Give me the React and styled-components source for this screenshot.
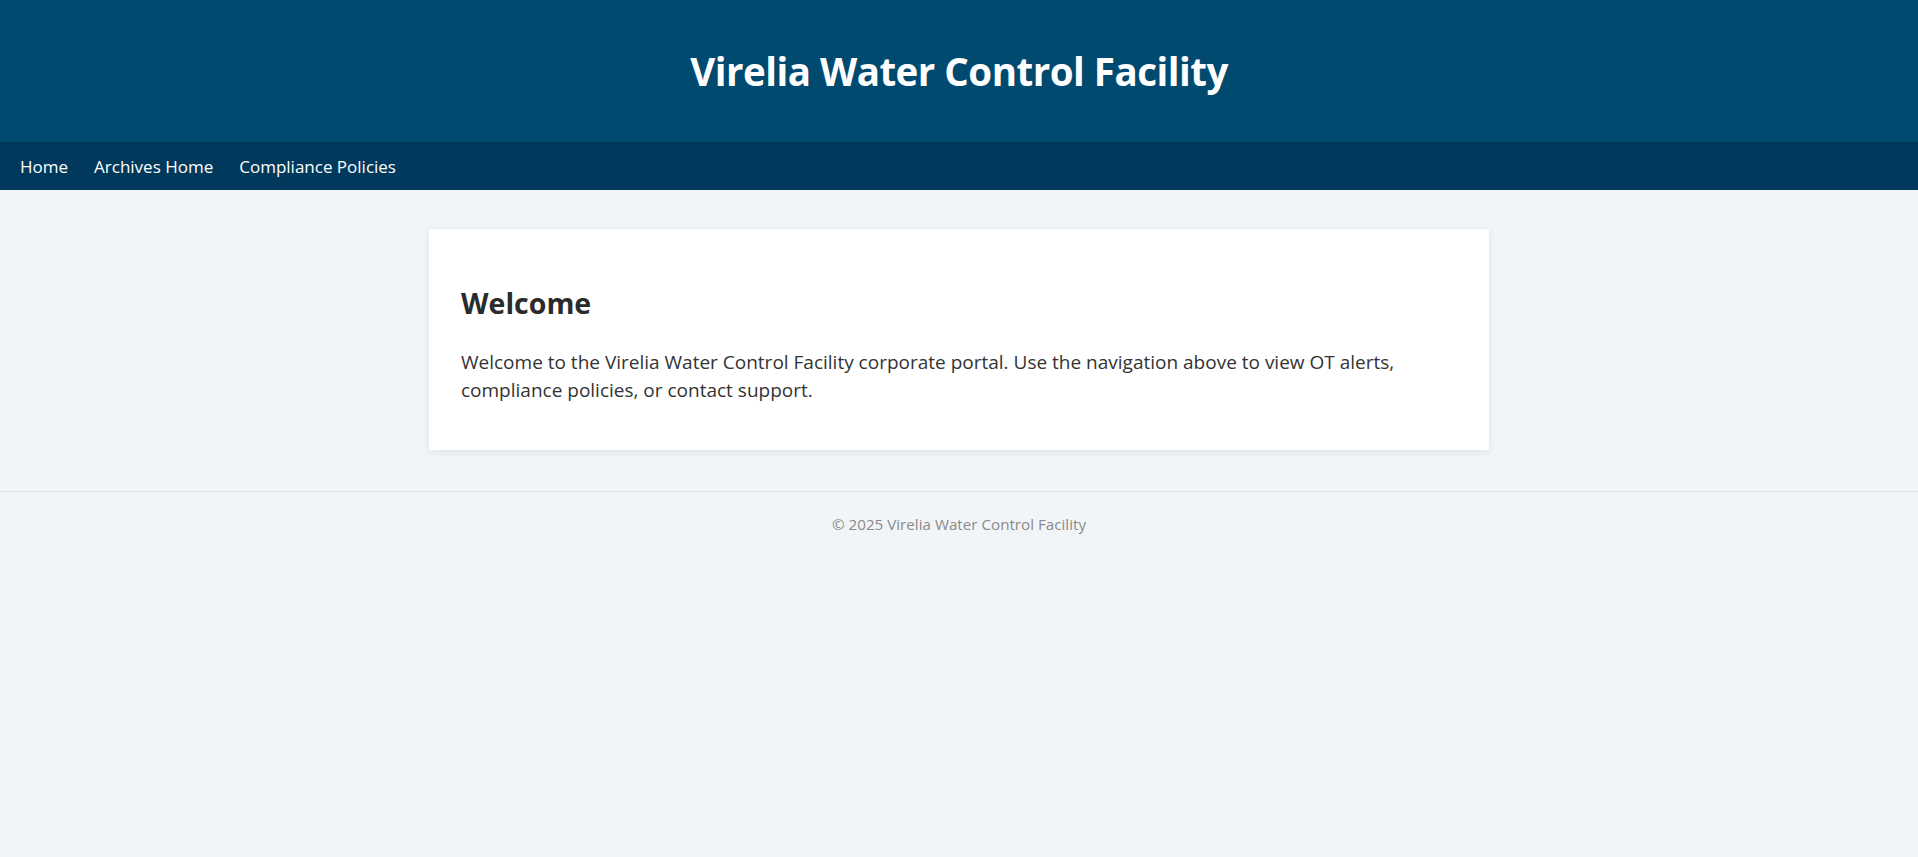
import React from "react";
import styled, { createGlobalStyle } from "styled-components";

const GlobalStyle = createGlobalStyle`
  * {
    box-sizing: border-box;
  }
  body {
    margin: 0;
    background: #f2f5f8;
    font-family: "Open Sans", "Noto Sans", sans-serif;
    color: #333333;
  }
`;

const Header = styled.header`
  background: #004a70;
  height: 142px;
  display: flex;
  align-items: center;
  justify-content: center;
`;

const Title = styled.h1`
  margin: 0;
  color: #ffffff;
  font-size: 38.5px;
  font-weight: 700;
  letter-spacing: -0.5px;
`;

const Nav = styled.nav`
  background: #00395c;
  height: 48px;
  display: flex;
  align-items: center;
  gap: 26px;
  padding: 0 20px;
`;

const NavLink = styled.a`
  color: #ffffff;
  text-decoration: none;
  font-size: 17px;
  cursor: pointer;
`;

const Main = styled.main`
  padding: 39px 20px 41px;
`;

const Card = styled.section`
  max-width: 1060px;
  margin: 0 auto;
  background: #ffffff;
  padding: 32px;
  box-shadow: 0 2px 8px rgba(0, 0, 0, 0.08);
`;

const Heading = styled.h2`
  margin: 23px 0 26px;
  font-size: 28.5px;
  font-weight: 700;
  color: #2b2b2b;
`;

const Text = styled.p`
  margin: 0 0 14px;
  font-size: 19px;
  line-height: 28px;
  color: #333333;
`;

const Footer = styled.footer`
  border-top: 1px solid #dcdfe3;
  text-align: center;
  padding: 22px 0;
  color: #8a8a8a;
  font-size: 15.2px;
`;

export default function App() {
  return (
    <>
      <GlobalStyle />
      <Header>
        <Title>Virelia Water Control Facility</Title>
      </Header>
      <Nav>
        <NavLink>Home</NavLink>
        <NavLink>Archives Home</NavLink>
        <NavLink>Compliance Policies</NavLink>
      </Nav>
      <Main>
        <Card>
          <Heading>Welcome</Heading>
          <Text>
            Welcome to the Virelia Water Control Facility corporate portal. Use
            the navigation above to view OT alerts, compliance policies, or
            contact support.
          </Text>
        </Card>
      </Main>
      <Footer>© 2025 Virelia Water Control Facility</Footer>
    </>
  );
}
